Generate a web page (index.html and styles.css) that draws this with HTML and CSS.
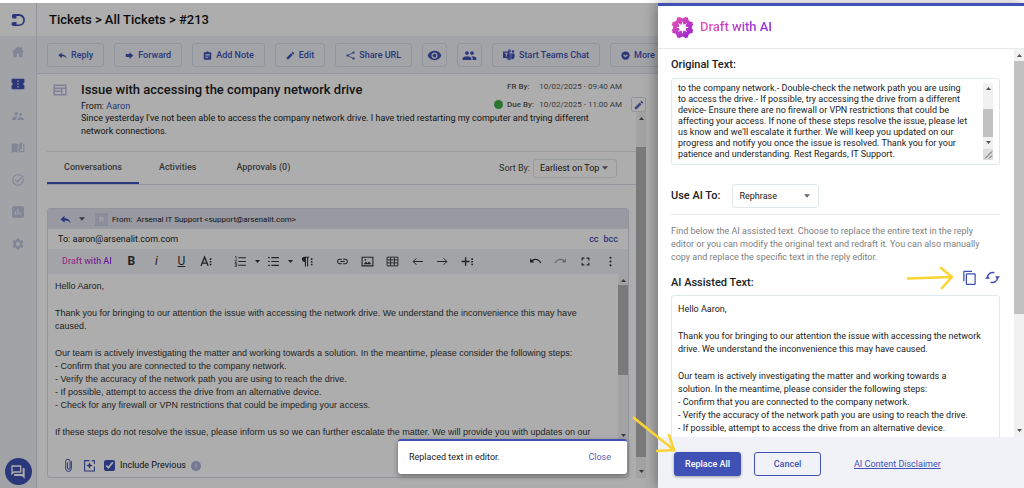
FILE: index.html
```html
<!DOCTYPE html>
<html lang="en">
<head>
<meta charset="utf-8">
<title>Tickets - Draft with AI</title>
<link rel="stylesheet" href="styles.css">
</head>
<body>
<svg class="sprite" aria-hidden="true">
  <symbol id="home" viewBox="0 0 24 24"><path d="M10 21v-6h4v6h6v-9h3L19 8.500V4h-3v2L12 2 1 12h3v9z"/></symbol>
  <symbol id="ticket" viewBox="0 0 24 24"><path d="M23 10V5c0-1-.9-2-2-2H3c-1.100 0-2 .9-2 2v5c1.100 0 2 .9 2 2s-.9 2-2 2v5c0 1.100.9 2 2 2h18c1.100 0 2-.9 2-2v-5c-1.100 0-2-.9-2-2s.9-2 2-2zm-10 8h-2v-2.500h2zm0-4.700h-2v-2.600h2zm0-4.800h-2V6h2z"/></symbol>
  <symbol id="people" viewBox="0 0 24 24"><path d="M16.5 12c1.38 0 2.49-1.12 2.49-2.5S17.88 7 16.5 7C15.12 7 14 8.12 14 9.5s1.12 2.5 2.5 2.5zM9 11c1.66 0 2.99-1.34 2.99-3S10.66 5 9 5C7.34 5 6 6.34 6 8s1.34 3 3 3zm7.5 3c-1.83 0-5.5.92-5.5 2.75V19h11v-2.250c0-1.830-3.670-2.750-5.500-2.750zM9 13c-2.330 0-7 1.170-7 3.500V19h7v-2.250c0-.85.33-2.340 2.370-3.470C10.500 13.100 9.660 13 9 13z"/></symbol>
  <symbol id="book" viewBox="0 0 24 24"><path d="M1 5c3-1.500 7-1.500 10.500 0v15C8 18.500 4 18.500 1 20zM19 1v12l-4 3V4.500z"/><path d="M13 5.500V20c3-1.500 7-1.500 10 0V5l-2-.8V17.500c-2-.4-4-.2-6 .5V5z"/></symbol>
  <symbol id="task" viewBox="0 0 24 24"><path d="M22 5.180L10.590 16.600l-4.240-4.240 1.410-1.410 2.830 2.830 10-10L22 5.180zm-2.210 5.040c.13.57.21 1.170.21 1.780 0 4.420-3.580 8-8 8s-8-3.580-8-8 3.580-8 8-8c1.580 0 3.040.46 4.280 1.250l1.440-1.440C16.100 2.670 14.130 2 12 2 6.480 2 2 6.480 2 12s4.480 10 10 10 10-4.480 10-10c0-1.190-.22-2.330-.6-3.390l-1.610 1.610z"/></symbol>
  <symbol id="chart" viewBox="0 0 24 24"><path d="M20 2H4c-1.100 0-2 .9-2 2v16c0 1.100.9 2 2 2h16c1.100 0 2-.9 2-2V4c0-1.100-.9-2-2-2zM9 17H7v-7h2v7zm4 0h-2V7h2v10zm4 0h-2v-4h2v4z"/></symbol>
  <symbol id="gear" viewBox="0 0 24 24"><path d="M19.14 12.94c.04-.3.06-.61.06-.94 0-.32-.02-.64-.07-.94l2.030-1.580c.18-.14.23-.41.12-.61l-1.920-3.320c-.12-.22-.37-.29-.59-.22l-2.390.96c-.5-.38-1.030-.7-1.620-.94l-.36-2.540c-.04-.24-.24-.41-.48-.41h-3.840c-.24 0-.43.17-.47.41l-.36 2.540c-.59.24-1.130.57-1.620.94l-2.390-.96c-.22-.08-.47 0-.59.22L2.740 8.870c-.12.21-.08.47.12.61l2.030 1.580c-.05.3-.09.63-.09.94s.02.64.07.94l-2.030 1.580c-.18.14-.23.41-.12.61l1.920 3.320c.12.22.37.29.59.22l2.390-.96c.5.38 1.030.7 1.620.94l.36 2.540c.05.24.24.41.48.41h3.840c.24 0 .44-.17.47-.41l.36-2.540c.59-.24 1.130-.56 1.620-.94l2.390.96c.22.08.47 0 .59-.22l1.920-3.320c.12-.22.07-.47-.12-.61l-2.010-1.580zM12 15.600c-1.980 0-3.600-1.620-3.600-3.600s1.620-3.600 3.600-3.600 3.600 1.620 3.600 3.600-1.620 3.600-3.600 3.600z"/></symbol>
  <symbol id="reply" viewBox="0 0 24 24"><path d="M10 9V4L1 11.500 10 19v-5c6 0 10 1.500 13 6-1-6-5-11-13-11z"/></symbol>
  <symbol id="forward" viewBox="0 0 24 24"><path d="M2 8h10V3l10 9-10 9v-5H2z"/></symbol>
  <symbol id="note" viewBox="0 0 24 24"><path d="M20 3h-4.180C15.400 1.840 13.300 1 12 1c-1.300 0-3.400.84-3.820 2H4c-1.100 0-2 .9-2 2v16c0 1.100.9 2 2 2h16c1.100 0 2-.9 2-2V5c0-1.100-.9-2-2-2zm-6 15H6v-2h8v2zm4-4H6v-2h12v2zm0-4H6V8h12v2z"/></symbol>
  <symbol id="edit" viewBox="0 0 24 24"><path d="M2 17.500V22h4.500L18 10.500 13.500 6 2 17.500zM21.500 7a1.200 1.200 0 0 0 0-1.700l-2.800-2.800a1.200 1.200 0 0 0-1.700 0l-2.200 2.200 4.500 4.500z"/></symbol>
  <symbol id="share" viewBox="0 0 24 24"><path d="M20 4 5 12l15 8" fill="none" stroke="currentColor" stroke-width="2"/><circle cx="20" cy="4" r="3"/><circle cx="4" cy="12" r="3"/><circle cx="20" cy="20" r="3"/></symbol>
  <symbol id="eye" viewBox="0 0 24 24"><path d="M12 4.500C7 4.500 2.730 7.610 1 12c1.730 4.390 6 7.500 11 7.500s9.270-3.110 11-7.500c-1.730-4.390-6-7.500-11-7.500zM12 17c-2.760 0-5-2.240-5-5s2.240-5 5-5 5 2.240 5 5-2.240 5-5 5zm0-8c-1.660 0-3 1.340-3 3s1.340 3 3 3 3-1.340 3-3-1.340-3-3-3z"/></symbol>
  <symbol id="group" viewBox="0 0 24 24"><path d="M16 11c1.660 0 2.990-1.340 2.990-3S17.660 5 16 5c-1.660 0-3 1.340-3 3s1.340 3 3 3zm-8 0c1.660 0 2.990-1.340 2.990-3S9.660 5 8 5C6.340 5 5 6.340 5 8s1.340 3 3 3zm0 2c-2.330 0-7 1.170-7 3.500V19h14v-2.500c0-2.330-4.670-3.500-7-3.500zm8 0c-.29 0-.62.02-.97.05 1.160.84 1.970 1.970 1.970 3.450V19h6v-2.500c0-2.330-4.670-3.500-7-3.500z"/></symbol>
  <symbol id="teams" viewBox="0 0 24 24"><circle cx="13" cy="4" r="3.500" fill="#6f78d0"/><circle cx="20" cy="5" r="2.500"/><path d="M16 9h7v7c0 3-3 5-6 4z"/><path d="M7 9h11v8c0 7-10 7-11 1z" fill="#6f78d0"/><rect x="0" y="5" width="13" height="13" rx="1"/><path d="M3.500 8.500h6M6.500 8.500v7" stroke="#fff" stroke-width="1.800"/></symbol>
  <symbol id="more" viewBox="0 0 24 24"><circle cx="12" cy="12" r="11"/><path d="m7 10 5 5 5-5" fill="none" stroke="#f0f2f8" stroke-width="3"/></symbol>
  <symbol id="webpage" viewBox="0 0 24 24"><path d="M2 4h20v16H2zM2 9h20M15 9v11M2 14h13" fill="none" stroke="currentColor" stroke-width="2.500"/></symbol>
  <symbol id="caret" viewBox="0 0 10 6"><path d="M0 0h10L5 6z"/></symbol>
  <symbol id="up" viewBox="0 0 10 6"><path d="M0 6h10L5 0z"/></symbol>
  <symbol id="size" viewBox="0 0 24 24"><path d="M2 20 8.500 4 15 20M4.500 15h8" fill="none" stroke="currentColor" stroke-width="2.500"/><path d="M18 6h3v3h-3zM18 11h3v3h-3zM18 16h3v3h-3z"/></symbol>
  <symbol id="ol" viewBox="0 0 24 24"><path d="M8 5h14M8 12h14M8 19h14" stroke="currentColor" stroke-width="2"/><path d="M2 3h2v5M1 10h4l-3 4h3M1 16h4v5H1M2 18.500h3" fill="none" stroke="currentColor" stroke-width="1.300"/></symbol>
  <symbol id="ul" viewBox="0 0 24 24"><path d="M8 5h14M8 12h14M8 19h14M2 5h3M2 12h3M2 19h3" stroke="currentColor" stroke-width="2.200"/></symbol>
  <symbol id="para" viewBox="0 0 24 24"><path d="M8 3h9v2h-2v16h-2V5h-2v16H9v-8a5 5 0 0 1-1-10zM20 6h3v3h-3zM20 11h3v3h-3zM20 16h3v3h-3z"/></symbol>
  <symbol id="link" viewBox="0 0 24 24"><path d="M3.900 12c0-1.710 1.390-3.100 3.100-3.100h4V7H7c-2.760 0-5 2.240-5 5s2.240 5 5 5h4v-1.900H7c-1.710 0-3.100-1.390-3.100-3.100zM8 13h8v-2H8v2zm9-6h-4v1.900h4c1.710 0 3.100 1.390 3.100 3.100s-1.390 3.100-3.100 3.100h-4V17h4c2.760 0 5-2.240 5-5s-2.240-5-5-5z"/></symbol>
  <symbol id="image" viewBox="0 0 24 24"><path d="M2 4h20v16H2z" fill="none" stroke="currentColor" stroke-width="2"/><path d="m5 17 4-5 3 3 3-3 4 5z"/><circle cx="8" cy="9" r="1.500"/></symbol>
  <symbol id="table" viewBox="0 0 24 24"><path d="M2 4h20v16H2zM2 9h20M2 14.500h20M8.500 4v16M15.500 4v16" fill="none" stroke="currentColor" stroke-width="1.700"/></symbol>
  <symbol id="left" viewBox="0 0 24 24"><path d="M22 12H4M10 6l-6 6 6 6" fill="none" stroke="currentColor" stroke-width="1.800"/></symbol>
  <symbol id="right" viewBox="0 0 24 24"><path d="M2 12h18M14 6l6 6-6 6" fill="none" stroke="currentColor" stroke-width="1.800"/></symbol>
  <symbol id="plus" viewBox="0 0 24 24"><path d="M1 12h15M8.500 4v16" stroke="currentColor" stroke-width="2.500"/><path d="M19 6h3v3h-3zM19 11h3v3h-3zM19 16h3v3h-3z"/></symbol>
  <symbol id="undo" viewBox="0 0 24 24"><path d="M2 6v8h8l-3-3c5-3 10-2 14 4l2-1C18 6 11 5 5 9z"/></symbol>
  <symbol id="redo" viewBox="0 0 24 24"><path d="M22 6v8h-8l3-3c-5-3-10-2-14 4l-2-1C6 6 13 5 19 9z"/></symbol>
  <symbol id="full" viewBox="0 0 24 24"><path d="M3 9V3h6M15 3h6v6M21 15v6h-6M9 21H3v-6" fill="none" stroke="currentColor" stroke-width="3"/></symbol>
  <symbol id="dots" viewBox="0 0 24 24"><circle cx="12" cy="5" r="2"/><circle cx="12" cy="12" r="2"/><circle cx="12" cy="19" r="2"/></symbol>
  <symbol id="clip" viewBox="0 0 12 24"><path d="M10.500 5v12a4.500 4.500 0 0 1-9 0V5.500a3.500 3.500 0 0 1 7 0V16a2 2 0 0 1-4 0V7" fill="none" stroke="currentColor" stroke-width="1.600"/></symbol>
  <symbol id="addtpl" viewBox="0 0 24 24"><path d="M12 3H3v19h18v-8M16 3h5v6" fill="none" stroke="currentColor" stroke-width="2"/><path d="m12 6 1.700 4.300L18 12l-4.300 1.700L12 18l-1.700-4.300L6 12l4.300-1.700z"/></symbol>
  <symbol id="chat" viewBox="0 0 24 24"><path d="M15 4v7H5.170L4 12.170V4h11m1-2H3c-.55 0-1 .45-1 1v14l4-4h10c.55 0 1-.45 1-1V3c0-.55-.45-1-1-1zm5 4h-2v9H6v2c0 .55.45 1 1 1h11l4 4V7c0-.55-.45-1-1-1z"/></symbol>
  <symbol id="copy" viewBox="0 0 24 24"><path d="M16 1H4c-1.100 0-2 .9-2 2v15h2V3h12V1zm4 4H8c-1.100 0-2 .9-2 2v15c0 1.100.9 2 2 2h12c1.100 0 2-.9 2-2V7c0-1.100-.9-2-2-2zm0 17H8V7h12v15z"/></symbol>
  <symbol id="refresh" viewBox="0 0 24 24"><path d="M4 12a8 8 0 0 1 11-7.500M20 12a8 8 0 0 1-11 7.500" fill="none" stroke="currentColor" stroke-width="2.400"/><path d="M0 14l4-5 4 5zM16 10h8l-4 5z"/></symbol>
</svg>

<div class="app">
  <nav class="rail" aria-label="Main">
    <a class="brand" href="#" aria-label="Desk home"><svg viewBox="0 0 30 28"><path d="M2 5a3 3 0 0 1 3-3h11a12 12 0 0 1 0 24H5a3 3 0 0 1 0-8h6v5h5a8.500 8.500 0 0 0 0-17h-5v5H5a3 3 0 0 1-3-3z"/></svg></a>
    <ul class="rail-links">
      <li><a href="#" aria-label="Home"><svg><use href="#home"/></svg></a></li>
      <li><a class="current" href="#" aria-label="Tickets"><svg><use href="#ticket"/></svg></a></li>
      <li><a href="#" aria-label="Users"><svg><use href="#people"/></svg></a></li>
      <li><a href="#" aria-label="Knowledge base"><svg><use href="#book"/></svg></a></li>
      <li><a href="#" aria-label="Tasks"><svg><use href="#task"/></svg></a></li>
      <li><a href="#" aria-label="Reports"><svg><use href="#chart"/></svg></a></li>
      <li><a href="#" aria-label="Settings"><svg><use href="#gear"/></svg></a></li>
    </ul>
    <button class="chat" aria-label="Chat"><svg><use href="#chat"/></svg></button>
  </nav>

  <main class="main">
    <h1 class="crumbs">Tickets &gt; All Tickets &gt; #213</h1>
    <div class="actions">
      <button class="action"><svg><use href="#reply"/></svg>Reply</button>
      <button class="action"><svg><use href="#forward"/></svg>Forward</button>
      <button class="action"><svg><use href="#note"/></svg>Add Note</button>
      <button class="action"><svg><use href="#edit"/></svg>Edit</button>
      <button class="action"><svg><use href="#share"/></svg>Share URL</button>
      <button class="action square" aria-label="Watch"><svg><use href="#eye"/></svg></button>
      <button class="action square" aria-label="Collaborators"><svg><use href="#group"/></svg></button>
      <button class="action teams"><svg><use href="#teams"/></svg>Start Teams Chat</button>
      <button class="action"><svg><use href="#more"/></svg>More</button>
    </div>

    <div class="ticket">
      <header class="summary">
        <svg class="source"><use href="#webpage"/></svg>
        <div class="subject">
          <h2>Issue with accessing the company network drive</h2>
          <p>From: <a href="#">Aaron</a></p>
        </div>
        <dl class="dates">
          <dt>FR By:</dt><dd>10/02/2025 - 09:40 AM</dd>
          <dt class="ok">Due By:</dt><dd>10/02/2025 - 11:00 AM</dd>
        </dl>
        <button class="edit-date" aria-label="Edit due date"><svg><use href="#edit"/></svg></button>
      </header>

      <div class="scroller">
        <div class="thread">
          <p class="description">Since yesterday I've not been able to access the company network drive. I have tried restarting my computer and trying different network connections.</p>
          <div class="tabbar">
            <div class="tabs" role="tablist">
              <button class="tab active" role="tab" aria-selected="true">Conversations</button>
              <button class="tab" role="tab">Activities</button>
              <button class="tab" role="tab">Approvals (0)</button>
            </div>
            <label class="sort-label" for="sort">Sort By:</label>
            <span class="select sort"><select id="sort"><option>Earliest on Top</option></select><svg><use href="#caret"/></svg></span>
          </div>

          <section class="composer">
            <div class="from-row">
              <svg class="reply-icon"><use href="#reply"/></svg>
              <svg class="caret"><use href="#caret"/></svg>
              <span class="badge">R</span>
              <span>From:</span><span>Arsenal IT Support &lt;support@arsenalit.com&gt;</span>
            </div>
            <div class="to-row"><span>To: aaron@arsenalit.com.com</span><a href="#">cc</a><a href="#">bcc</a></div>
            <div class="format">
              <button class="draft gradient">Draft with AI</button>
              <button class="tool"><b>B</b></button>
              <button class="tool"><i>i</i></button>
              <button class="tool"><u>U</u></button>
              <button class="tool" aria-label="Font size"><svg><use href="#size"/></svg></button>
              <span class="lists">
                <button aria-label="Numbered list"><svg><use href="#ol"/></svg><svg class="mini"><use href="#caret"/></svg></button>
                <button aria-label="Bulleted list"><svg><use href="#ul"/></svg><svg class="mini"><use href="#caret"/></svg></button>
                <button aria-label="Paragraph"><svg><use href="#para"/></svg></button>
              </span>
              <button class="tool" aria-label="Link"><svg><use href="#link"/></svg></button>
              <button class="tool" aria-label="Image"><svg><use href="#image"/></svg></button>
              <button class="tool" aria-label="Table"><svg><use href="#table"/></svg></button>
              <button class="tool" aria-label="Left to right"><svg><use href="#left"/></svg></button>
              <button class="tool" aria-label="Right to left"><svg><use href="#right"/></svg></button>
              <button class="tool" aria-label="Insert"><svg><use href="#plus"/></svg></button>
              <button class="tool end" aria-label="Undo"><svg><use href="#undo"/></svg></button>
              <button class="tool faded" aria-label="Redo"><svg><use href="#redo"/></svg></button>
              <button class="tool" aria-label="Full screen"><svg class="small"><use href="#full"/></svg></button>
              <button class="tool" aria-label="More"><svg><use href="#dots"/></svg></button>
            </div>
            <div class="edit-area">
              <div class="message" role="textbox" aria-label="Reply" contenteditable="true" spellcheck="false">
                <p>Hello Aaron,</p>
                <p>Thank you for bringing to our attention the issue with accessing the network drive. We understand the inconvenience this may have caused.</p>
                <p>Our team is actively investigating the matter and working towards a solution. In the meantime, please consider the following steps:<br>- Confirm that you are connected to the company network.<br>- Verify the accuracy of the network path you are using to reach the drive.<br>- If possible, attempt to access the drive from an alternative device.<br>- Check for any firewall or VPN restrictions that could be impeding your access.</p>
                <p>If these steps do not resolve the issue, please inform us so we can further escalate the matter. We will provide you with updates on our</p>
              </div>
              <div class="bar message-bar"><svg><use href="#up"/></svg><i></i><svg><use href="#caret"/></svg></div>
            </div>
            <div class="composer-foot">
              <svg class="clip"><use href="#clip"/></svg>
              <svg class="tpl"><use href="#addtpl"/></svg>
              <input type="checkbox" id="prev" checked>
              <label for="prev">Include Previous</label>
              <span class="info">i</span>
            </div>
          </section>
        </div>
        <div class="bar thread-bar"><svg><use href="#up"/></svg><i></i><svg><use href="#caret"/></svg></div>
      </div>
    </div>
  </main>

  <div class="backdrop"></div>

  <aside class="drawer" aria-label="Draft with AI">
    <header class="drawer-head">
      <svg viewBox="0 0 48 48" aria-hidden="true">
        <defs>
          <linearGradient id="pinks" x1="0" y1="0" x2="1" y2="1"><stop offset="0" stop-color="#f655b0"/><stop offset="1" stop-color="#8b1fdb"/></linearGradient>
          <path id="petal" fill="#fff" d="M16 1l8 4 8-4 2 12-7 5-3-7-3 7-7-5z"/>
          <mask id="ring">
            <use href="#petal"/><use href="#petal" transform="rotate(45 24 24)"/><use href="#petal" transform="rotate(90 24 24)"/><use href="#petal" transform="rotate(135 24 24)"/>
            <use href="#petal" transform="rotate(180 24 24)"/><use href="#petal" transform="rotate(225 24 24)"/><use href="#petal" transform="rotate(270 24 24)"/><use href="#petal" transform="rotate(315 24 24)"/>
          </mask>
        </defs>
        <rect width="48" height="48" fill="url(#pinks)" mask="url(#ring)"/>
      </svg>
      <h2 class="gradient">Draft with AI</h2>
    </header>
    <div class="drawer-scroll">
      <div class="drawer-body">
        <label class="field-label" for="original">Original Text:</label>
        <div class="field original">
          <textarea id="original" spellcheck="false">to the company network.- Double-check the network path you are using
to access the drive.- If possible, try accessing the drive from a different
device- Ensure there are no firewall or VPN restrictions that could be
affecting your access. If none of these steps resolve the issue, please let
us know and we'll escalate it further. We will keep you updated on our
progress and notify you once the issue is resolved. Thank you for your
patience and understanding. Rest Regards, IT Support.</textarea>
          <div class="bar original-bar"><svg><use href="#up"/></svg><i></i><svg><use href="#caret"/></svg><svg class="grip" viewBox="0 0 10 10"><path d="m2 9 7-7M6 9l3-3" stroke="#555"/></svg></div>
        </div>
        <div class="use-row">
          <label class="field-label" for="mode">Use AI To:</label>
          <span class="select mode"><select id="mode"><option>Rephrase</option></select><svg><use href="#caret"/></svg></span>
        </div>
        <p class="hint">Find below the AI assisted text. Choose to replace the entire text in the reply editor or you can modify the original text and redraft it. You can also manually copy and replace the specific text in the reply editor.</p>
        <div class="assist-row">
          <span class="field-label" id="assist">AI Assisted Text:</span>
          <svg class="arrow" viewBox="0 0 48 24" aria-hidden="true"><path d="M2 12.500 46 11M35 2l11 9-10 11" fill="none" stroke="#fbd433" stroke-width="2.600" stroke-linecap="round" stroke-linejoin="round"/></svg>
          <button aria-label="Copy"><svg><use href="#copy"/></svg></button>
          <button aria-label="Regenerate"><svg><use href="#refresh"/></svg></button>
        </div>
        <div class="field assisted" role="textbox" aria-labelledby="assist" contenteditable="true" spellcheck="false">
          <p>Hello Aaron,</p>
          <p>Thank you for bringing to our attention the issue with accessing the network drive. We understand the inconvenience this may have caused.</p>
          <p>Our team is actively investigating the matter and working towards a solution. In the meantime, please consider the following steps:<br>- Confirm that you are connected to the company network.<br>- Verify the accuracy of the network path you are using to reach the drive.<br>- If possible, attempt to access the drive from an alternative device.</p>
        </div>
      </div>
      <div class="bar drawer-bar"><svg><use href="#up"/></svg><i></i><svg><use href="#caret"/></svg></div>
    </div>
    <footer class="drawer-foot">
      <button class="primary">Replace All</button>
      <button class="secondary">Cancel</button>
      <a href="#">AI Content Disclaimer</a>
      <svg class="pointer" viewBox="0 0 44 36" aria-hidden="true"><path d="M2 2 42 34M37 19l5 15-17 1" fill="none" stroke="#fbd433" stroke-width="2.600" stroke-linecap="round" stroke-linejoin="round"/></svg>
    </footer>
  </aside>

  <div class="toast" role="status"><span>Replaced text in editor.</span><button>Close</button></div>
</div>
</body>
</html>
```

FILE: styles.css
```css
* { box-sizing: border-box; }
:root { --primary: #3f51b5; --line: #d9dce6; --bar: #f0f2f8; }
body {
  margin: 0;
  padding-top: 3px;
  height: 100vh;
  overflow: hidden;
  background: #fff;
  color: #212121;
  font: 9px/13px Roboto, "Liberation Sans", sans-serif;
}
h1, h2, p, dl, dd, ul { margin: 0; padding: 0; }
a { color: var(--primary); text-decoration: none; }
button, select, textarea { font: inherit; color: inherit; border: 0; background: none; padding: 0; margin: 0; outline: 0; }
svg { display: block; flex: none; width: 12px; height: 12px; fill: currentColor; }
.sprite { position: absolute; width: 0; height: 0; }

.app { position: relative; display: grid; grid-template-columns: 37px minmax(0, 1fr) 366px; height: 100%; }
.backdrop { position: absolute; inset: 0; background: rgba(0, 0, 0, .32); }

/* Navigation rail */
.rail { display: flex; flex-direction: column; align-items: center; background: #eef0f7; border-right: 1px solid var(--line); }
.brand { display: flex; align-items: center; justify-content: center; width: 100%; height: 33px; background: #fff; }
.brand svg { width: 15px; height: 14px; }
.rail-links { list-style: none; display: grid; gap: 18px; padding-top: 9px; }
.rail-links a { color: #c0c4de; }
.rail-links a.current { color: var(--primary); }
.rail-links svg { width: 14px; height: 14px; }
.chat { margin: auto 0 3px; display: grid; place-items: center; width: 27px; height: 27px; border-radius: 50%; background: var(--primary); color: #fff; }
.chat svg { width: 16px; height: 16px; }

/* Ticket header */
.main { display: flex; flex-direction: column; min-width: 0; height: 100%; overflow: hidden; background: #fff; }
.crumbs { padding: 0 12px; font-size: 13px; line-height: 33px; font-weight: 500; color: #111; }
.actions { display: flex; gap: 10px; padding: 7px 10px 6px; background: var(--bar); border-bottom: 1px solid var(--line); overflow: hidden; }
.action { display: flex; flex: none; align-items: center; gap: 4px; height: 24px; padding: 0 10px; border: 1px solid var(--line); border-radius: 3px; color: var(--primary); font-weight: 500; white-space: nowrap; }
.action svg { width: 9px; height: 9px; }
.action.square { padding: 0 4px; }
.action.square svg { width: 15px; height: 15px; }
.action.teams svg { width: 12px; height: 12px; }

.ticket { display: flex; flex: 1; flex-direction: column; min-height: 0; padding: 7px 12px 10px 10px; }
.summary { display: flex; gap: 9px; height: 31px; }
.source { width: 14px; height: 14px; margin: 2px 5px 0 6px; color: #b9bde0; }
.subject { flex: 1; }
.subject h2 { font-size: 13px; line-height: 18px; font-weight: 500; }
.subject p { padding-top: 1px; }
.dates { display: grid; grid-template-columns: auto auto; gap: 5px; font-size: 8px; line-height: 12px; color: #555; }
.dates dt { position: relative; font-weight: 500; }
.dates .ok::before { content: ""; position: absolute; right: 100%; top: 1px; width: 9px; height: 9px; margin-right: 4px; border-radius: 50%; background: #3fae49; }
.edit-date { display: grid; place-items: center; align-self: end; width: 15px; height: 15px; border: 1px solid var(--line); border-radius: 2px; color: #5d6bc0; }
.edit-date svg { width: 10px; height: 10px; }

.scroller { display: flex; flex: 1; min-height: 0; }
.thread { display: flex; flex: 1; flex-direction: column; min-width: 0; }
.description { padding: 0 34px; }
.tabbar { display: flex; align-items: center; height: 34px; margin-top: 13px; border-top: 1px solid #e6e6ea; border-bottom: 1px solid var(--line); }
.tabs { display: flex; flex: 1; height: 100%; }
.tab { padding: 0 17px; color: #555; font-weight: 500; border-bottom: 2px solid transparent; }
.tab + .tab { padding: 0 20px; }
.tab.active { border-color: var(--primary); }
.sort-label { color: #444; }
.select { position: relative; display: flex; align-items: center; border: 1px solid #dfe6ea; border-radius: 3px; }
.select select { width: 100%; height: 100%; appearance: none; }
.select svg { position: absolute; right: 8px; width: 6px; height: 4px; color: #666; pointer-events: none; }
.sort { width: 84px; height: 19px; margin: 0 19px 0 3px; }
.sort select { padding: 0 6px; }

/* Reply composer */
.composer { display: flex; flex: 1; flex-direction: column; min-height: 0; margin: 23px 7px 0 0; border: 1px solid var(--line); border-radius: 3px; overflow: hidden; }
.from-row { display: flex; align-items: center; gap: 4px; height: 20px; padding: 0 12px; background: #e0e2ee; font-size: 8px; }
.reply-icon { width: 11px; height: 11px; color: var(--primary); }
.caret { width: 6px; height: 4px; margin: 0 6px 0 4px; color: #555; }
.badge { width: 13px; background: #cdd0e8; color: #fff; text-align: center; }
.to-row { display: flex; align-items: center; gap: 5px; height: 20px; padding: 0 10px; }
.to-row span { flex: 1; }
.to-row a { font-weight: 500; }
.format { display: flex; align-items: center; height: 25px; padding: 0 5px 0 14px; background: var(--bar); color: #333; }
.gradient { background: linear-gradient(90deg, #ee4fb4, #8b2be2); background-clip: text; -webkit-background-clip: text; color: transparent; font-weight: 500; }
.draft { margin-right: 7px; white-space: nowrap; }
.tool { display: flex; align-items: center; justify-content: center; flex: 0 1 25px; min-width: 0; height: 24px; font-size: 12px; }
.tool b { font-weight: 700; }
.tool svg, .lists svg { width: 13px; height: 13px; }
.tool svg.small { width: 9px; height: 9px; }
.end { margin-left: auto; }
.faded { opacity: .45; }
.lists { display: flex; align-items: center; gap: 7px; margin: 0 17px 0 15px; }
.lists button { display: flex; align-items: center; gap: 8px; }
.lists .mini { width: 5px; height: 3px; }
.edit-area { display: flex; flex: 1; min-height: 0; overflow: hidden; }
.message { flex: 1; padding: 6px 18px 0 7px; outline: 0; color: #333; font-family: "Liberation Sans", Arial, sans-serif; }
.message p + p, .assisted p + p { margin-top: 14px; }
.composer-foot { display: flex; align-items: center; gap: 5px; padding: 16px 16px 4px; }
.clip { width: 9px; height: 15px; color: var(--primary); }
.tpl { width: 13px; height: 13px; margin: 0 3px 0 5px; color: var(--primary); }
.composer-foot input { width: 11px; height: 11px; margin: 0; accent-color: var(--primary); }
.info { width: 10px; height: 10px; border-radius: 50%; background: #a9b1dd; color: #fff; font-size: 8px; line-height: 10px; text-align: center; }

/* Scroll tracks */
.bar { display: flex; flex: none; flex-direction: column; align-items: center; width: 10px; padding: 5px 0; background: #f1f1f1; color: #555; }
.bar i { flex: none; width: 100%; background: #c1c1c1; }
.bar svg { width: 5px; height: 3px; }
.bar i + svg { margin-top: auto; }
.thread-bar i { height: 87%; margin-top: 27px; background: #b4b4b4; }
.message-bar i { height: 57%; margin-top: 3px; background: #b4b4b4; }

/* AI drawer */
.drawer { position: relative; display: flex; flex-direction: column; min-height: 0; background: #fff; border-top: 3px solid var(--primary); box-shadow: -2px 0 12px rgba(0, 0, 0, .35); }
.drawer-head { display: flex; align-items: center; gap: 6px; height: 43px; padding: 0 13px; border-bottom: 1px solid #e4e9ea; }
.drawer-head svg { width: 23px; height: 23px; }
.drawer-head h2 { font-size: 13px; line-height: 20px; }
.drawer-scroll { display: flex; flex: 1; min-height: 0; overflow: hidden; }
.drawer-body { flex: 1; min-width: 0; padding: 9px 14px 0 13px; }
.field-label { display: block; font-size: 11px; line-height: 14px; font-weight: 500; }
.field { border: 1px solid #dfe9eb; border-radius: 3px; }
.original { display: flex; height: 87px; margin-top: 6px; padding: 4px 6px; }
.original textarea { flex: 1; min-width: 0; resize: none; overflow: hidden; white-space: pre; line-height: 11px; }
.original-bar { padding: 4px 0 0; }
.original-bar i { height: 28px; margin-top: 19px; }
.original-bar i + svg { margin: 4px 0; }
.original-bar .grip { width: 10px; height: 11px; margin-top: auto; background: #ddd; }
.use-row { display: flex; align-items: center; gap: 12px; padding: 19px 0 6px; border-bottom: 1px solid #e9ecec; }
.mode { width: 87px; height: 24px; }
.mode select { padding: 0 6px; }
.hint { padding: 10px 10px 0 0; color: #808080; }
.assist-row { display: flex; align-items: center; gap: 8px; height: 31px; padding-bottom: 4px; color: var(--primary); }
.assist-row .field-label { flex: 1; padding-top: 10px; color: #212121; }
.assist-row button svg { width: 15px; height: 15px; }
.assist-row .arrow { width: 48px; height: 24px; }
.assisted { padding: 7px 17px 7px 6px; outline: 0; }
.drawer-bar i { height: 67%; margin-top: 4px; }
.drawer-foot { position: relative; display: flex; align-items: center; gap: 13px; height: 51px; padding: 3px 16px 0; background: #f0f2f8; }
.drawer-foot button { width: 67px; height: 24px; border: 1px solid var(--primary); border-radius: 3px; color: var(--primary); font-weight: 500; }
.drawer-foot .primary { background: var(--primary); color: #fff; box-shadow: 0 1px 3px rgba(0, 0, 0, .35); }
.drawer-foot a { margin-left: 20px; text-decoration: underline; }
.pointer { position: absolute; left: -26px; top: -21px; width: 44px; height: 36px; }

/* Toast */
.toast { position: absolute; right: 397px; bottom: 14px; display: flex; align-items: center; justify-content: space-between; width: 229px; height: 35px; padding: 0 16px 0 11px; border-top: 2px solid var(--primary); border-radius: 3px; background: #fff; box-shadow: 0 2px 5px rgba(0, 0, 0, .4); }
.toast button { color: #5664bd; }
```
